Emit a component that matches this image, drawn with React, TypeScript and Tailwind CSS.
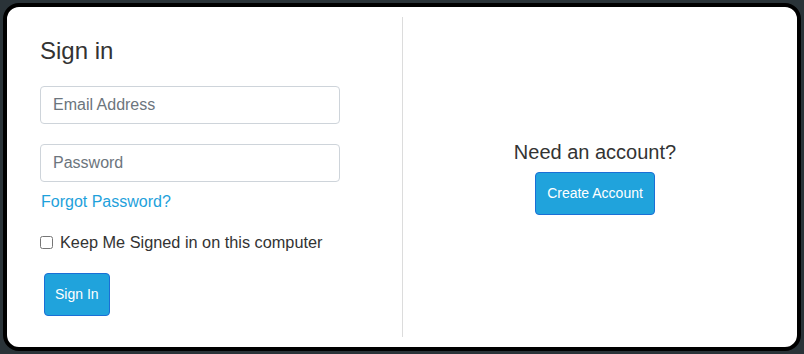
import React from "react";

export default function App() {
  return (
    <div
      className="w-[804px] h-[354px] bg-[#2a3338] pt-[3px] pl-[3px]"
      style={{ fontFamily: '"Liberation Sans", Arial, sans-serif' }}
    >
      <div className="w-[798px] h-[348px] bg-white border-4 border-black rounded-[16px] flex py-[10px]">
        {/* Left column */}
        <div className="w-[396px] border-r border-[#dcdcdc] pl-[33px] pt-[19px]">
          <h2 className="text-[24px] leading-[29px] text-[#333] font-normal">Sign in</h2>
          <input
            type="text"
            placeholder="Email Address"
            className="mt-[21px] block w-[300px] h-[38px] border border-[#ced4da] rounded-[4px] px-[12px] text-[16px] text-[#495057] placeholder:text-[#6c757d] outline-none"
          />
          <input
            type="password"
            placeholder="Password"
            className="mt-[20px] block w-[300px] h-[38px] border border-[#ced4da] rounded-[4px] px-[12px] text-[16px] text-[#495057] placeholder:text-[#6c757d] outline-none"
          />
          <a href="#" className="mt-[8px] ml-[1px] block text-[16px] leading-[24px] text-[#1ea1db] w-fit">
            Forgot Password?
          </a>
          <label className="mt-[16px] flex items-center h-[24px] text-[16.3px] text-[#333]">
            <input type="checkbox" className="w-[13px] h-[13px] m-0 mr-[7px]" />
            Keep Me Signed in on this computer
          </label>
          <button className="mt-[19px] ml-[4px] h-[43px] px-[10px] bg-[#20a3dc] border border-[#1a6fd6] rounded-[4px] text-white text-[14px]">
            Sign In
          </button>
        </div>
        {/* Right column */}
        <div className="flex-1 flex flex-col items-center justify-center pr-[10px]">
          <h5 className="text-[20px] leading-[24px] text-[#333] font-medium">Need an account?</h5>
          <button className="mt-[8px] h-[43px] px-[11px] bg-[#20a3dc] border border-[#1a6fd6] rounded-[4px] text-white text-[14px]">
            Create Account
          </button>
        </div>
      </div>
    </div>
  );
}
